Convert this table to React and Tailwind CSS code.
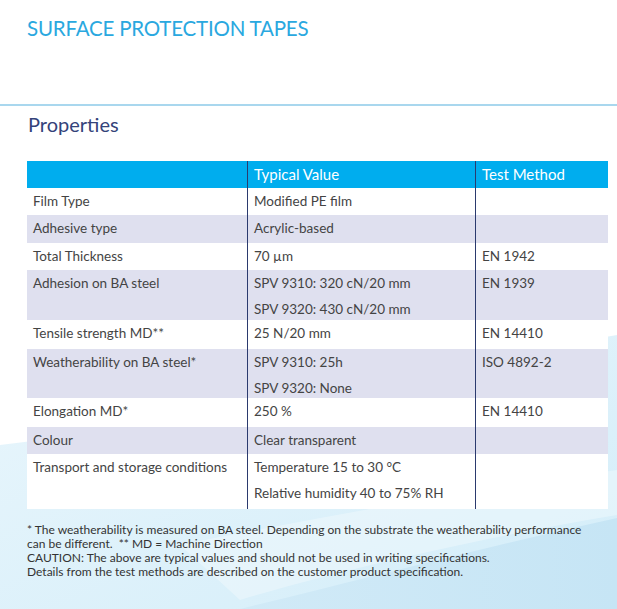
import React from "react";

const rows = [
  { h: "h-[27px]", label: "Film Type", value: ["Modified PE film"], method: "", shade: false },
  { h: "h-[28px]", label: "Adhesive type", value: ["Acrylic-based"], method: "", shade: true },
  { h: "h-[27px]", label: "Total Thickness", value: ["70 µm"], method: "EN 1942", shade: false },
  { h: "h-[50px]", label: "Adhesion on BA steel", value: ["SPV 9310: 320 cN/20 mm", "SPV 9320: 430 cN/20 mm"], method: "EN 1939", shade: true },
  { h: "h-[29px]", label: "Tensile strength MD**", value: ["25 N/20 mm"], method: "EN 14410", shade: false },
  { h: "h-[49px]", label: "Weatherability on BA steel*", value: ["SPV 9310: 25h", "SPV 9320: None"], method: "ISO 4892-2", shade: true },
  { h: "h-[29px]", label: "Elongation MD*", value: ["250 %"], method: "EN 14410", shade: false },
  { h: "h-[27px]", label: "Colour", value: ["Clear transparent"], method: "", shade: true },
  { h: "h-[55px]", label: "Transport and storage conditions", value: ["Temperature 15 to 30 °C", "Relative humidity 40 to 75% RH"], method: "", shade: false },
];

// soft blue waves behind the lower half of the sheet
const Background = () => (
  <svg className="absolute inset-0 w-full h-full" viewBox="0 0 617 609" preserveAspectRatio="none">
    <defs>
      <linearGradient id="bgA" x1="0" y1="0" x2="1" y2="1">
        <stop offset="0" stopColor="#e9f6fc" />
        <stop offset="1" stopColor="#d3edf9" />
      </linearGradient>
      <linearGradient id="bgB" x1="0" y1="0" x2="1" y2="0">
        <stop offset="0" stopColor="#d1eaf7" />
        <stop offset="1" stopColor="#c6e5f5" />
      </linearGradient>
    </defs>
    <path d="M0,445 C180,425 380,375 617,335 L617,609 L0,609 Z" fill="url(#bgA)" />
    <path d="M180,545 C330,515 470,490 617,470 L617,515 C470,540 340,570 240,600 Z" fill="#ffffff" opacity="0.3" />
    <path d="M240,609 C360,580 480,548 617,518 L617,609 Z" fill="url(#bgB)" />
  </svg>
);

const App = () => {
  return (
    <div className="relative w-[617px] h-[609px] overflow-hidden bg-white font-['Lato',sans-serif]">
      <Background />
      <div className="relative flex flex-col">
        <div className="px-[27px] pt-[16px] h-[104px] text-[20.5px] leading-[24px] text-[#2aa8df] tracking-[-0.2px]">
          SURFACE PROTECTION TAPES
        </div>
        <div className="h-[1.5px] bg-[#a9d7ee] w-full" />
        <div className="px-[28px] pt-[6px] h-[55px] text-[20px] leading-[24px] text-[#34437a]">Properties</div>

        <div className="ml-[27px] w-[581px] flex flex-col text-[13.5px] text-[#444444]">
          <div className="grid grid-cols-[220px_228px_133px] h-[27px] bg-[#00adee] text-white text-[15px] leading-[26px]">
            <div />
            <div className="border-l-[1.5px] border-[#2b3a6e] pl-[6px]">Typical Value</div>
            <div className="border-l-[1.5px] border-[#2b3a6e] pl-[6px]">Test Method</div>
          </div>
          {rows.map((r) => (
            <div
              key={r.label}
              className={`grid grid-cols-[220px_228px_133px] leading-[26px] ${r.h} ${r.shade ? "bg-[#dfe0ef]" : "bg-white"}`}
            >
              <div className="pl-[6px]">{r.label}</div>
              <div className="border-l-[1.5px] border-[#2b3a6e] pl-[6px] flex flex-col">
                {r.value.map((v) => (
                  <span key={v}>{v}</span>
                ))}
              </div>
              <div className="border-l-[1.5px] border-[#2b3a6e] pl-[6px]">{r.method}</div>
            </div>
          ))}
        </div>

        <div className="px-[27px] pt-[14px] text-[12px] leading-[14px] text-[#333333]">
          <p>* The weatherability is measured on BA steel. Depending on the substrate the weatherability performance can be different. &nbsp;** MD = Machine Direction</p>
          <p>CAUTION: The above are typical values and should not be used in writing specifications.</p>
          <p>Details from the test methods are described on the customer product specification.</p>
        </div>
      </div>
    </div>
  );
};

export default App;
